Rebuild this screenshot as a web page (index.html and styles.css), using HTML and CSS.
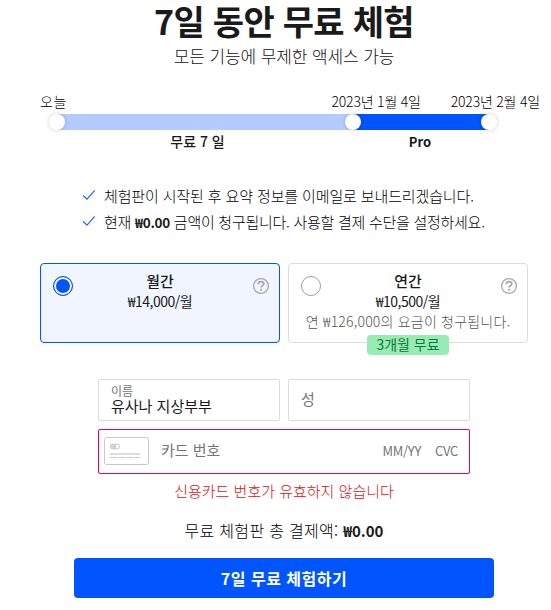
FILE: index.html
```html
<!DOCTYPE html>
<html lang="ko">
<head>
    <meta charset="UTF-8">
    <meta name="viewport" content="width=device-width, initial-scale=1.0">
    <title>7일 동안 무료 체험</title>
    <link rel="stylesheet" href="styles.css">
</head>
<body>
    <div class="trial">
        <h1>7일 동안 무료 체험</h1>
        <p class="subtitle">모든 기능에 무제한 액세스 가능</p>

        <div class="timeline">
            <div class="dates">
                <span class="today">오늘</span>
                <span class="first">2023년 1월 4일</span>
                <span class="second">2023년 2월 4일</span>
            </div>
            <div class="track">
                <div class="free"></div>
                <div class="pro"></div>
                <span class="dot dot-start"></span>
                <span class="dot dot-middle"></span>
                <span class="dot dot-end"></span>
            </div>
            <div class="periods">
                <strong class="period-free">무료 7 일</strong>
                <strong class="period-pro">Pro</strong>
            </div>
        </div>

        <ul class="info">
            <li>
                <svg width="14" height="12" viewBox="0 0 14 12"><path d="M1 6.5 5 10.2 12.7 1.3" fill="none" stroke="#1f69ff" stroke-width="1.2"/></svg>
                <span class="line-one">체험판이 시작된 후 요약 정보를 이메일로 보내드리겠습니다.</span>
            </li>
            <li>
                <svg width="14" height="12" viewBox="0 0 14 12"><path d="M1 6.5 5 10.2 12.7 1.3" fill="none" stroke="#1f69ff" stroke-width="1.2"/></svg>
                <span class="line-two">현재 <strong>₩0.00</strong> 금액이 청구됩니다. 사용할 결제 수단을 설정하세요.</span>
            </li>
        </ul>

        <div class="plans">
            <div class="plan selected">
                <span class="radio"></span>
                <div class="plan-text">
                    <div class="plan-name">월간</div>
                    <div class="plan-price">₩14,000/월</div>
                </div>
                <svg class="help" width="18" height="18" viewBox="0 0 18 18"><circle cx="9" cy="9" r="7.4" fill="none" stroke="#a8a8aa" stroke-width="1.3"/><path d="M6.3 7.2C6.4 5.4 7.5 4.7 9 4.7s2.7.8 2.7 2.2c0 1.8-2.6 1.7-2.6 3.6" fill="none" stroke="#a8a8aa" stroke-width="1.8"/><circle cx="9.1" cy="12.8" r="1.1" fill="#a8a8aa"/></svg>
            </div>
            <div class="plan">
                <span class="radio"></span>
                <div class="plan-text">
                    <div class="plan-name">연간</div>
                    <div class="plan-price">₩10,500/월</div>
                    <div class="plan-note">연 ₩126,000의 요금이 청구됩니다.</div>
                </div>
                <svg class="help" width="18" height="18" viewBox="0 0 18 18"><circle cx="9" cy="9" r="7.4" fill="none" stroke="#a8a8aa" stroke-width="1.3"/><path d="M6.3 7.2C6.4 5.4 7.5 4.7 9 4.7s2.7.8 2.7 2.2c0 1.8-2.6 1.7-2.6 3.6" fill="none" stroke="#a8a8aa" stroke-width="1.8"/><circle cx="9.1" cy="12.8" r="1.1" fill="#a8a8aa"/></svg>
                <span class="badge">3개월 무료</span>
            </div>
        </div>

        <div class="form">
            <div class="names">
                <div class="field filled">
                    <span class="label">이름</span>
                    <span class="value">유사나 지상부부</span>
                </div>
                <div class="field">
                    <span class="placeholder">성</span>
                </div>
            </div>
            <div class="card">
                <svg width="45" height="28" viewBox="0 0 45 28">
                    <rect x=".5" y=".5" width="44" height="27" rx="2" fill="#fff" stroke="#c9c9c9"/>
                    <circle cx="9" cy="9.5" r="2.6" fill="#d8d8d8" stroke="#c9c9c9"/>
                    <circle cx="13" cy="9.5" r="2.6" fill="none" stroke="#c9c9c9"/>
                    <path d="M6 17H36" stroke="#dcdcdc" stroke-width="2"/>
                    <path d="M6 20.5H36" stroke="#c9c9c9" stroke-dasharray="7 1"/>
                </svg>
                <span class="number">카드 번호</span>
                <span class="expiry">MM/YY</span>
                <span class="cvc">CVC</span>
            </div>
            <p class="error">신용카드 번호가 유효하지 않습니다</p>
        </div>

        <p class="total">무료 체험판 총 결제액: <strong>₩0.00</strong></p>
        <button class="submit">7일 무료 체험하기</button>
    </div>
</body>
</html>
```
FILE: styles.css
```css
* {
    box-sizing: border-box;
}
body {
    margin: 0;
    background-color: #fff;
    color: #1a1a1a;
    font-family: "Noto Sans CJK KR", sans-serif;
    font-size: 14px;
    line-height: 20px;
}
h1, p, ul {
    margin: 0;
    padding: 0;
}
strong {
    font-weight: 700;
}
.trial {
    width: 488px;
    margin-left: 40px;
    white-space: nowrap;
}
h1 {
    padding-top: 1px;
    font-size: 34px;
    line-height: 40px;
    letter-spacing: -0.7px;
    text-align: center;
}
.subtitle {
    margin-top: 3px;
    color: #111;
    font-size: 17px;
    font-weight: 300;
    line-height: 24px;
    letter-spacing: -0.1px;
    text-align: center;
}

/* timeline */
.timeline {
    margin-top: 23px;
}
.dates {
    display: flex;
    width: 500px;
    height: 23px;
    color: #000;
    font-weight: 300;
    letter-spacing: -0.2px;
}
.today {
    letter-spacing: 0.5px;
}
.first {
    margin-left: auto;
}
.second {
    margin-left: 30px;
}
.track {
    position: relative;
    display: flex;
    width: 432px;
    height: 16px;
    margin-left: 17px;
}
.free {
    width: 296px;
    background-color: #b2ccff;
}
.pro {
    flex: 1;
    background-color: #0055ff;
}
.dot {
    position: absolute;
    top: 0;
    width: 16px;
    height: 16px;
    border-radius: 50%;
    background-color: #fff;
    box-shadow: 0 0 4px rgba(0, 0, 0, 0.2);
}
.dot-start {
    left: -8px;
}
.dot-middle {
    left: 288px;
}
.dot-end {
    left: 424px;
}
.periods {
    display: flex;
    margin-left: 17px;
    padding-top: 1px;
    font-size: 13px;
    text-align: center;
}
.period-free {
    width: 281px;
    font-size: 14px;
    font-weight: 500;
}
.period-pro {
    width: 164px;
    padding-top: 1px;
}

/* info */
.info {
    display: flex;
    flex-direction: column;
    gap: 6px;
    margin: 34px 0 0 42px;
    list-style: none;
    color: #000;
    font-size: 15px;
    font-weight: 300;
}
.info li {
    display: flex;
    height: 20px;
}
.info svg {
    margin: 3px 8px 0 0;
}
.line-one {
    letter-spacing: -0.13px;
}
.line-two {
    letter-spacing: -0.27px;
}
.line-two strong {
    color: #1a1a1a;
    font-size: 13.5px;
}

/* plans */
.plans {
    display: flex;
    gap: 8px;
    margin-top: 31px;
}
.plan {
    position: relative;
    flex: 1;
    height: 80px;
    padding: 7px 12px;
    border: 1px solid #dcdcdc;
    border-radius: 4px;
    text-align: center;
}
.selected {
    border-color: #0055ff;
    background-color: #f0f5ff;
}
.radio {
    position: absolute;
    top: 12px;
    left: 12px;
    width: 20px;
    height: 20px;
    border: 1px solid #a0a0a0;
    border-radius: 50%;
    background-color: #fff;
}
.selected .radio {
    border-color: #0055ff;
    background-color: #0055ff;
    box-shadow: inset 0 0 0 2px #fff;
}
.help {
    position: absolute;
    top: 13px;
    right: 9px;
}
.plan-name {
    font-size: 15px;
    font-weight: 500;
}
.plan-price {
    letter-spacing: -0.5px;
}
.plan-note {
    color: #555;
    font-weight: 300;
    letter-spacing: 0.2px;
}
.badge {
    position: absolute;
    top: 71px;
    left: 78px;
    width: 82px;
    height: 20px;
    border-radius: 4px;
    background-color: #99ebb4;
    color: #0b7a34;
    line-height: 18px;
}

/* form */
.form {
    width: 372px;
    margin: 36px 0 0 58px;
}
.names {
    display: flex;
    gap: 8px;
}
.field {
    display: flex;
    flex-direction: column;
    justify-content: center;
    flex: 1;
    height: 42px;
    padding: 0 12px 3px;
    border: 1px solid #dcdcdc;
    border-radius: 2px;
    font-size: 15px;
}
.label {
    color: #757575;
    font-size: 12px;
    line-height: 15px;
}
.value {
    line-height: 16px;
}
.placeholder {
    color: #757575;
}
.card {
    display: flex;
    align-items: center;
    height: 45px;
    margin-top: 8px;
    padding: 0 11px 0 5px;
    border: 1px solid #f0004f;
    border-radius: 2px;
    color: #757575;
    font-size: 13px;
}
.card svg {
    margin-bottom: 1px;
}
.card span {
    padding-bottom: 1px;
}
.card .number {
    margin-left: 12px;
    padding-bottom: 3px;
    font-size: 15px;
}
.expiry {
    margin-left: auto;
    letter-spacing: -0.3px;
}
.cvc {
    margin-left: 14px;
    letter-spacing: -0.3px;
}
.error {
    margin-top: 7px;
    color: #e01010;
    font-size: 15px;
    font-weight: 300;
    text-align: center;
}

.total {
    height: 24px;
    margin-top: 17px;
    color: #000;
    font-size: 16px;
    font-weight: 300;
    line-height: 24px;
    letter-spacing: 0.3px;
    text-align: center;
}
.total strong {
    color: #1a1a1a;
    font-size: 15px;
    letter-spacing: 0;
}
.submit {
    display: block;
    width: 420px;
    height: 40px;
    margin: 16px 0 0 34px;
    padding: 0 0 1px;
    border: none;
    border-radius: 4px;
    background-color: #0055ff;
    color: #fff;
    font-family: inherit;
    font-size: 16px;
    font-weight: 700;
    letter-spacing: 0.5px;
}
```
